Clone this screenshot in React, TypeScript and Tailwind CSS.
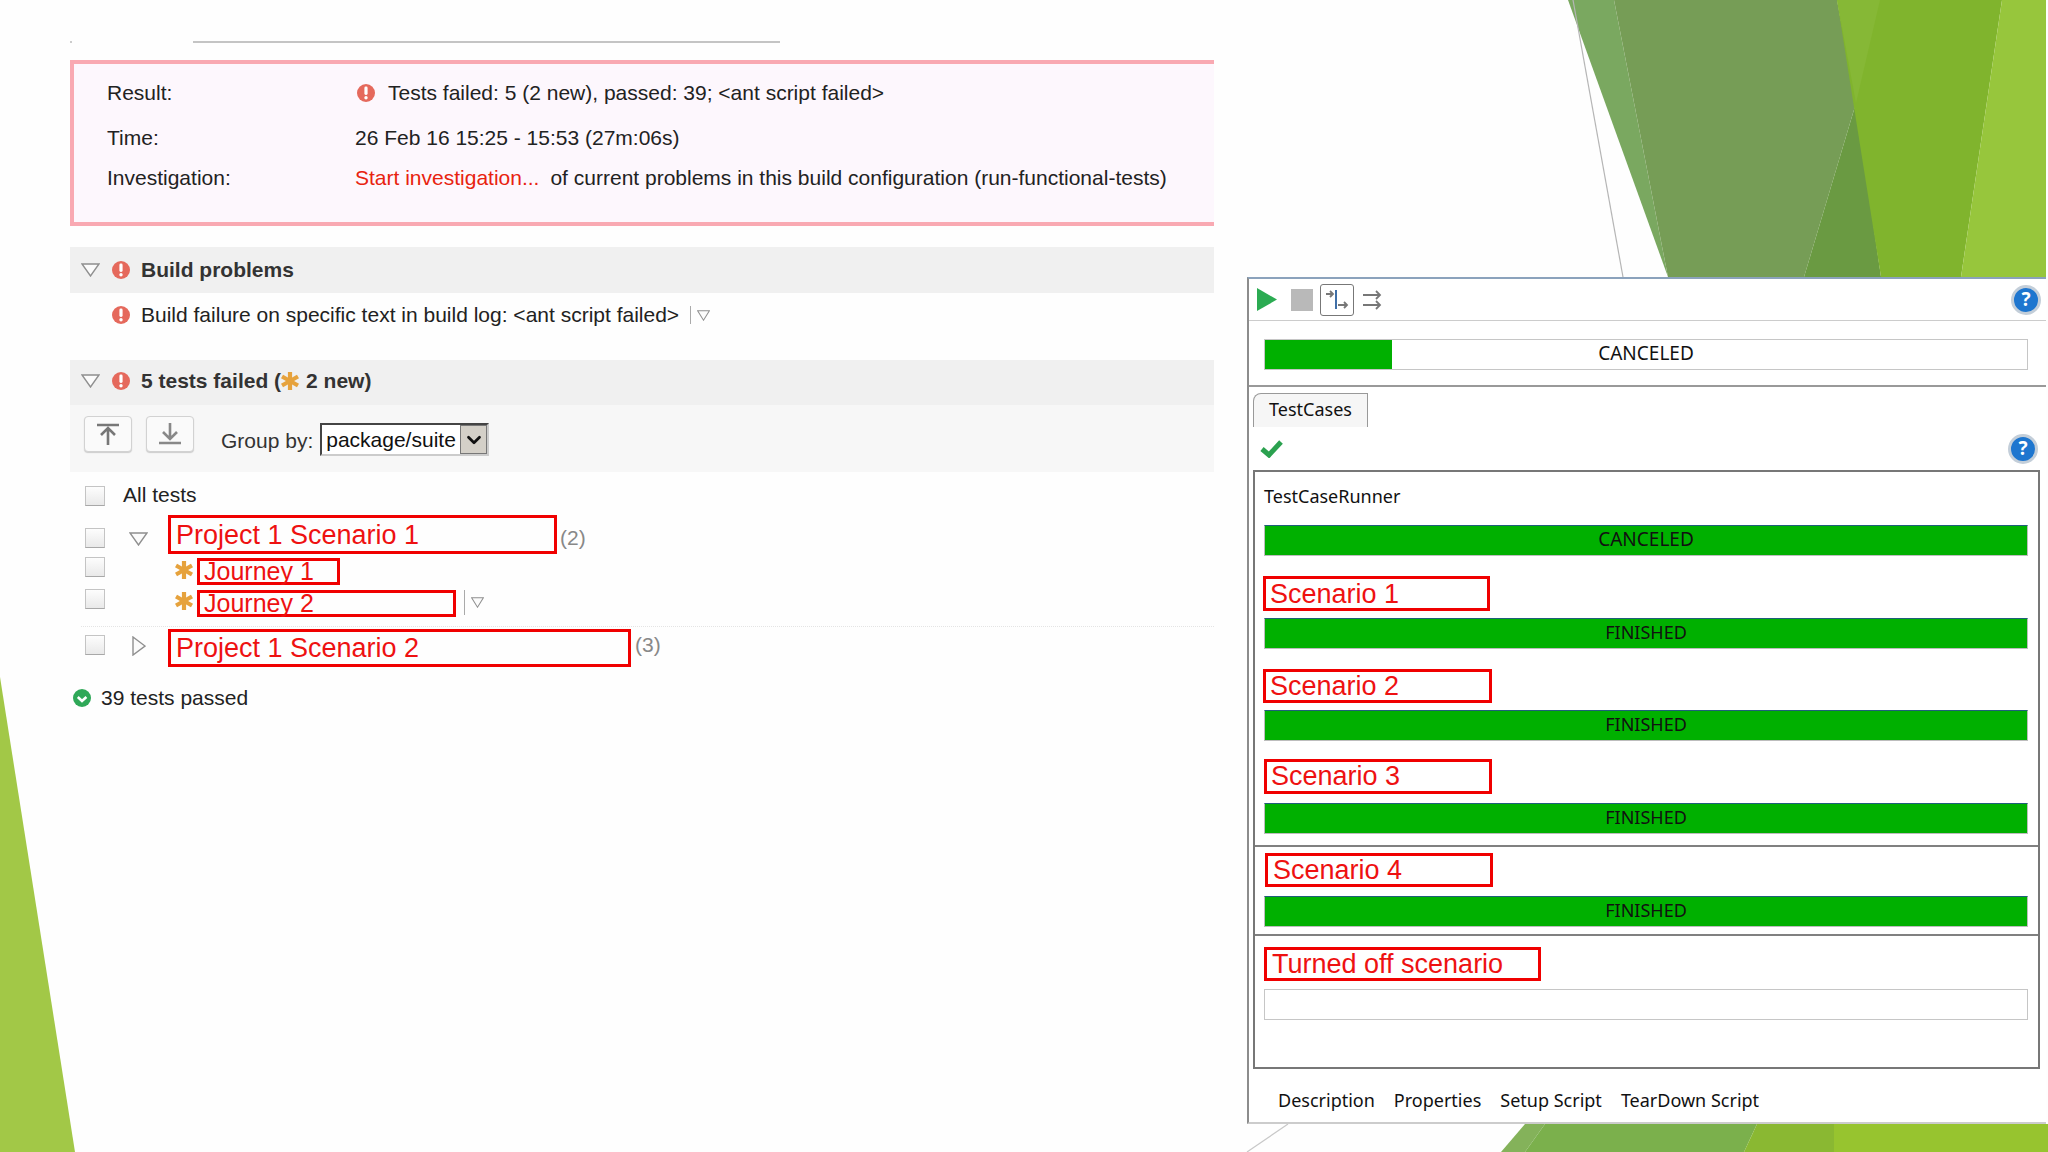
import React from "react";
import { ChevronDown } from "lucide-react";

const arial = "font-['Liberation_Sans',Arial,sans-serif]";
const segoe = "font-['Noto_Sans','Open_Sans',sans-serif]";

const ErrorIcon = () => (
  <svg width="18" height="20" viewBox="0 0 18 20" className="shrink-0">
    <circle cx="9" cy="10" r="9" fill="#e5695c" />
    <rect x="7.4" y="3.6" width="3.2" height="8.4" rx="1.4" fill="#fff" />
    <circle cx="9" cy="14.8" r="1.7" fill="#fff" />
  </svg>
);

const OkIcon = () => (
  <svg width="18" height="20" viewBox="0 0 18 20" className="shrink-0">
    <circle cx="9" cy="10" r="9" fill="#2fa858" />
    <path d="M4.8 9 L9 13 L13.4 9" fill="none" stroke="#fff" strokeWidth="2.6" />
  </svg>
);

const Star = () => (
  <svg width="18" height="20" viewBox="0 0 18 20" className="shrink-0">
    <g stroke="#e6a23c" strokeWidth="4.2">
      <line x1="9" y1="1" x2="9" y2="19" />
      <line x1="1" y1="5.5" x2="17" y2="14.5" />
      <line x1="17" y1="5.5" x2="1" y2="14.5" />
    </g>
  </svg>
);

const TriDown = ({ w = 19, h = 14 }: { w?: number; h?: number }) => (
  <svg width={w} height={h} viewBox="0 0 19 14" preserveAspectRatio="none" className="shrink-0">
    <path d="M1 1 H18 L9.5 13 Z" fill="#fbfbfb" stroke="#8f8f8f" strokeWidth="1.4" />
  </svg>
);

const Checkbox = ({ className = "" }: { className?: string }) => (
  <div className={`h-[20px] w-[20px] shrink-0 border border-[#c4c4c4] border-b-[#a8a8a8] bg-gradient-to-b from-[#fdfdfd] to-[#e9e9e9] ${className}`} />
);

const RedBox = ({ text, className }: { text: string; className: string }) => (
  <div className={`flex shrink-0 items-center border-[3px] border-[#f00000] text-[#ee1111] ${className}`}>{text}</div>
);

const HelpIcon = () => (
  <div className="flex h-[30px] w-[30px] items-center justify-center rounded-full border-[3px] border-[#c3ced9] bg-[#1e76cf] text-[19px] font-bold leading-none text-white">
    ?
  </div>
);

const Bar = ({ label, fill = 100, dim = false, size = "text-[18px]" }: { label?: string; fill?: number; dim?: boolean; size?: string }) => (
  <div className={`relative ml-[9px] h-[31px] w-[764px] border ${dim ? "border-[#c6c6c6]" : "border-[#bdbdbd] border-t-[#1f5f7a]"} bg-white`}>
    {fill > 0 && <div className="absolute inset-y-0 left-0 bg-[#00b000]" style={{ width: `${fill}%` }} />}
    {label && (
      <div className={`relative flex h-full items-center justify-center pb-[2px] text-[#111] ${size} ${segoe}`}>{label}</div>
    )}
  </div>
);

const scenarios = [
  { name: "Scenario 1", box: "ml-[8px] w-[227px] h-[35px] pl-[4px] pt-[1px] mt-[20px]", gap: "mt-[7px]" },
  { name: "Scenario 2", box: "ml-[8px] w-[229px] h-[34px] pl-[4px] mt-[20px]", gap: "mt-[7px]" },
  { name: "Scenario 3", box: "ml-[9px] w-[228px] h-[35px] pl-[4px] mt-[18px]", gap: "mt-[9px]" },
];

const BuildPanel = () => (
  <div className={`relative z-10 w-[1144px] shrink-0 text-[21px] text-[#222] ${arial}`}>
    <div className="flex h-[60px] items-start pt-[41px]">
      <div className="h-[2px] w-[2px] bg-[#ccc]" />
      <div className="ml-[121px] h-[2px] w-[587px] bg-[#c4c4c4]" />
    </div>

    <div className="h-[166px] border-4 border-r-0 border-[#f9a9b2] bg-[#fdf7fd] pl-[33px] pt-[17px]">
      <div className="flex h-[24px] items-center">
        <div className="w-[248px]">Result:</div>
        <div className="ml-[2px] mr-[13px]"><ErrorIcon /></div>
        <div>Tests failed: 5 (2 new), passed: 39; &lt;ant script failed&gt;</div>
      </div>
      <div className="mt-[21px] flex h-[24px] items-center">
        <div className="w-[248px]">Time:</div>
        <div>26 Feb 16 15:25 - 15:53 (27m:06s)</div>
      </div>
      <div className="mt-[16px] flex h-[24px] items-center">
        <div className="w-[248px]">Investigation:</div>
        <div className="text-[#e8230f]">Start investigation...</div>
        <div className="ml-[11px]">of current problems in this build configuration (run-functional-tests)</div>
      </div>
    </div>

    <div className="mt-[21px] flex h-[46px] items-center bg-[#f0f0f0] pl-[11px]">
      <TriDown />
      <div className="ml-[12px] mr-[11px]"><ErrorIcon /></div>
      <div className="font-bold text-[#333]">Build problems</div>
    </div>
    <div className="flex h-[44px] items-center pl-[42px]">
      <div className="mr-[11px]"><ErrorIcon /></div>
      <div>Build failure on specific text in build log: &lt;ant script failed&gt;</div>
      <div className="ml-[11px] mr-[6px] h-[18px] w-px bg-[#aaa]" />
      <TriDown w={13} h={11} />
    </div>

    <div className="mt-[23px] flex h-[45px] items-center bg-[#f0f0f0] pb-[4px] pl-[11px]">
      <TriDown />
      <div className="ml-[12px] mr-[11px]"><ErrorIcon /></div>
      <div className="flex items-center font-bold text-[#333]">
        5 tests failed (<Star />
        <span className="ml-[7px]">2 new)</span>
      </div>
    </div>
    <div className="flex h-[67px] items-start bg-[#f7f7f7] pl-[14px] pt-[11px]">
      <div className="flex h-[36px] w-[48px] items-center justify-center rounded-[4px] border border-[#d2d2d2] bg-[#fafafa] shadow-[0_1px_1px_#ccc]">
        <svg width="24" height="24" viewBox="0 0 24 24" fill="none" stroke="#777" strokeWidth="2.6">
          <path d="M1 3 H23 M12 23 V7 M5 13 L12 6 L19 13" />
        </svg>
      </div>
      <div className="ml-[14px] flex h-[36px] w-[48px] items-center justify-center rounded-[4px] border border-[#d2d2d2] bg-[#fafafa] shadow-[0_1px_1px_#ccc]">
        <svg width="24" height="24" viewBox="0 0 24 24" fill="none" stroke="#888" strokeWidth="2.6">
          <path d="M1 21 H23 M12 1 V16 M5 10 L12 17 L19 10" />
        </svg>
      </div>
      <div className="ml-[27px] mt-[9px] text-[21px] text-[#333]">Group by:</div>
      <div className="ml-[7px] mt-[7px] flex h-[33px] w-[169px] items-center border-2 border-[#444] border-b-[#ccc] border-r-[#ccc] bg-white pl-[4px] text-[21px] leading-none text-[#111]">
        <span className="flex-1">package/suite</span>
        <div className="flex h-full w-[27px] items-center justify-center border border-[#777] bg-[#d4d0c8]">
          <ChevronDown size={22} strokeWidth={3} color="#111" />
        </div>
      </div>
    </div>

    <div className="mt-[13px] flex h-[20px] items-center pl-[15px]">
      <Checkbox className="mt-[2px]" />
      <div className="ml-[18px]">All tests</div>
    </div>

    <div className="mt-[10px] flex items-start pl-[15px] text-[27px] leading-none">
      <Checkbox className="mt-[13px]" />
      <div className="ml-[24px] mt-[17px]"><TriDown /></div>
      <RedBox text="Project 1 Scenario 1" className="ml-[20px] h-[39px] w-[389px] pl-[5px] pt-[1px]" />
      <div className="ml-[3px] mt-[11px] text-[21px] leading-[24px] text-[#888]">(2)</div>
    </div>
    <div className="mt-[3px] flex items-start pl-[15px] text-[25px] leading-none">
      <Checkbox />
      <div className="ml-[70px] mt-[3px]"><Star /></div>
      <RedBox text="Journey 1" className="ml-[4px] mt-[1px] h-[27px] w-[143px] pl-[4px]" />
    </div>
    <div className="mt-[4px] flex items-start pl-[15px] text-[25px] leading-none">
      <Checkbox />
      <div className="ml-[70px] mt-[2px]"><Star /></div>
      <RedBox text="Journey 2" className="ml-[4px] mt-[1px] h-[27px] w-[259px] pl-[4px]" />
      <div className="ml-[8px] mt-[1px] h-[25px] w-px bg-[#aaa]" />
      <div className="ml-[6px] mt-[8px]"><TriDown w={13} h={11} /></div>
    </div>
    <div className="ml-[11px] mt-[9px] border-t border-dotted border-[#e4e4e4]" />
    <div className="mt-[2px] flex items-start pl-[15px] text-[27px] leading-none">
      <Checkbox className="mt-[6px]" />
      <svg width="14" height="20" viewBox="0 0 14 20" className="ml-[27px] mt-[7px] shrink-0">
        <path d="M1 1 L13 10 L1 19 Z" fill="#fbfbfb" stroke="#8f8f8f" strokeWidth="1.4" />
      </svg>
      <RedBox text="Project 1 Scenario 2" className="ml-[22px] h-[38px] w-[463px] pl-[5px]" />
      <div className="ml-[4px] mt-[4px] text-[21px] leading-[24px] text-[#888]">(3)</div>
    </div>
    <div className="mt-[21px] flex h-[20px] items-center pl-[3px]">
      <OkIcon />
      <div className="ml-[10px]">39 tests passed</div>
    </div>
  </div>
);

const RunnerPanel = () => (
  <div className={`relative z-10 ml-[33px] mt-[277px] flex h-[847px] w-[799px] shrink-0 flex-col border-b-2 border-l-2 border-t-2 border-b-[#ccc] border-l-[#8c8c8c] border-t-[#8ba2bc] bg-white text-[#111] ${segoe}`}>
    <div className="flex h-[42px] shrink-0 items-center border-b border-[#ccc] pl-[8px]">
      <svg width="20" height="23" viewBox="0 0 20 23"><path d="M0 0 L20 11.5 L0 23 Z" fill="#2bab52" /></svg>
      <div className="ml-[14px] h-[22px] w-[22px] bg-[#b9b9b9]" />
      <div className="ml-[7px] flex h-[32px] w-[34px] items-center justify-center rounded-[3px] border border-[#777]">
        <svg width="24" height="24" viewBox="0 0 24 24" fill="none" strokeWidth="1.8">
          <path d="M1 6 H8 M5 3 L8 6 L5 9 M13 17 H22 M19 14 L22 17 L19 20" stroke="#777" />
          <path d="M11 2 V21" stroke="#2a5f9e" />
        </svg>
      </div>
      <svg width="20" height="24" viewBox="0 0 20 24" fill="none" stroke="#777" strokeWidth="1.8" className="ml-[8px]">
        <path d="M1 7 H18 M14 3 L18 7 L14 11 M1 17 H18 M14 13 L18 17 L14 21" />
      </svg>
      <div className="ml-auto mr-[5px]"><HelpIcon /></div>
    </div>
    <div className="h-[66px] shrink-0 border-b-2 border-[#999] pl-[6px] pt-[18px]">
      <Bar label="CANCELED" fill={16.7} dim size="text-[19px]" />
    </div>

    <div className="flex h-[40px] shrink-0 items-end pl-[4px]">
      <div className="flex h-[34px] w-[115px] items-center justify-center rounded-tl-[8px] border border-b-0 border-[#999] bg-[#f6f6f6] pb-[2px] text-[18px]">
        TestCases
      </div>
    </div>
    <div className="ml-[4px] mr-[4px] flex h-[43px] shrink-0 items-center pl-[7px]">
      <svg width="23" height="18" viewBox="0 0 23 18"><path d="M2 9 L9 15 L21 2" fill="none" stroke="#2ba14f" strokeWidth="5" /></svg>
      <div className="ml-auto mr-[4px]"><HelpIcon /></div>
    </div>

    <div className="ml-[4px] mr-[4px] h-[599px] w-[787px] shrink-0 border-2 border-[#777]">
      <div className="h-[53px] pl-[9px] pt-[11px] text-[18px] leading-[26px]">TestCaseRunner</div>
      <Bar label="CANCELED" size="text-[19px]" />
      {scenarios.map((s) => (
        <div key={s.name}>
          <div className={`${arial} text-[27px] leading-none`}>
            <RedBox text={s.name} className={s.box} />
          </div>
          <div className={s.gap}><Bar label="FINISHED" /></div>
        </div>
      ))}
      <div className="mt-[11px] h-[91px] border-y-2 border-[#808080] pt-[6px]">
        <div className={`${arial} text-[27px] leading-none`}>
          <RedBox text="Scenario 4" className="ml-[10px] h-[34px] w-[228px] pl-[5px]" />
        </div>
        <div className="mt-[9px]"><Bar label="FINISHED" /></div>
      </div>
      <div className={`${arial} mt-[11px] text-[27px] leading-none`}>
        <RedBox text="Turned off scenario" className="ml-[9px] h-[34px] w-[277px] pl-[5px]" />
      </div>
      <div className="mt-[8px]"><Bar fill={0} dim /></div>
    </div>

    <div className="flex flex-1 items-center gap-[19px] pl-[29px] pt-[10px] text-[18px]">
      <span>Description</span>
      <span>Properties</span>
      <span>Setup Script</span>
      <span>TearDown Script</span>
    </div>
  </div>
);

export default function App() {
  return (
    <div className="relative flex h-[1152px] w-[2048px] items-start overflow-hidden bg-[#fefefe] pl-[70px]">
      <svg width="2048" height="1152" viewBox="0 0 2048 1152" className="absolute inset-0">
        <polygon points="0,677 75,1152 0,1152" fill="#a2c847" />
        <polygon points="1568,0 1614,0 1668,277" fill="#7aa860" />
        <polygon points="1614,0 1837,0 1856,103 1804,277 1668,277" fill="#769d56" />
        <polygon points="1856,103 1881,277 1804,277" fill="#6a9a42" />
        <polygon points="1837,0 2002,0 1961,277 1881,277" fill="#80b42d" />
        <polygon points="1837,0 1880,0 1856,103" fill="#86b836" />
        <polygon points="2002,0 2046,0 2046,277 1961,277" fill="#97c63c" />
        <line x1="1573" y1="0" x2="1623" y2="277" stroke="#b5b5b5" strokeWidth="1.2" />
        <polygon points="1525,1124 1545,1124 1525,1152 1501,1152" fill="#84b25a" />
        <polygon points="1545,1124 1757,1124 1744,1152 1525,1152" fill="#7bb04c" />
        <polygon points="1757,1124 1834,1124 1834,1152 1744,1152" fill="#8ab832" />
        <polygon points="1834,1124 2048,1124 2048,1152 1834,1152" fill="#97c42f" />
        <line x1="1288" y1="1124" x2="1247" y2="1152" stroke="#c8c8c8" strokeWidth="1.2" />
      </svg>
      <BuildPanel />
      <RunnerPanel />
    </div>
  );
}
